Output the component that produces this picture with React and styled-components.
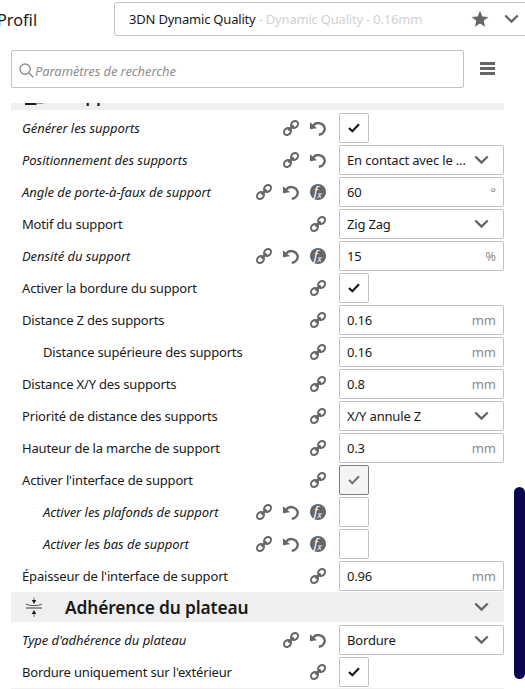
import React from "react";
import styled, { createGlobalStyle } from "styled-components";

const GlobalStyle = createGlobalStyle`
  * {
    box-sizing: border-box;
  }

  body {
    margin: 0;
    background: #fff;
    color: #191919;
    font-family: "Noto Sans", sans-serif;
    font-size: 13px;
    letter-spacing: -0.17px;
    overflow: hidden;
  }

  svg {
    display: block;
    flex: none;
  }
`;

const Page = styled.div`
  width: 525px;
  height: 689px;
  overflow: hidden;
  background: #fff;
`;

const ProfileBar = styled.div`
  display: flex;
  align-items: center;
  height: 36px;
  margin-top: 1px;
`;

const ProfileLabel = styled.div`
  flex: none;
  width: 117px;
  margin-left: -3px;
  padding-top: 1px;
  font-size: 16.3px;
  letter-spacing: 0;
  line-height: 36px;
`;

const ProfileSelect = styled.div`
  display: flex;
  align-items: center;
  flex: none;
  width: 430px;
  height: 34px;
  padding-left: 14px;
  border: 1px solid #c0c1c2;
  border-radius: 3px;
  letter-spacing: -0.2px;
  white-space: pre;
`;

const ProfileName = styled.div`
  width: 342px;
  line-height: 32px;

  span {
    color: #d2d2d2;
  }
`;

const ProfileIcons = styled.div`
  display: flex;
  align-items: center;
  gap: 15px;
`;

const SearchBar = styled.div`
  display: flex;
  align-items: center;
  margin: 13px 0 0 11px;
`;

const SearchField = styled.div`
  display: flex;
  align-items: center;
  width: 453px;
  height: 38px;
  padding: 3px 0 0 7px;
  border: 1px solid #c0c1c2;
  border-radius: 2px;
  color: #8e8e8e;
  font-style: italic;
  letter-spacing: -0.1px;

  span {
    margin-left: 1px;
  }
`;

const MenuIcon = styled.div`
  display: flex;
  flex-direction: column;
  gap: 2px;
  margin: 0 0 1px 16px;

  i {
    width: 15px;
    height: 3px;
    background: #666;
  }
`;

const Content = styled.div`
  display: flex;
  height: 586px;
  margin-top: 15px;
`;

const Viewport = styled.div`
  width: 493px;
  height: 586px;
  margin-left: 11px;
  overflow: hidden;
`;

const SettingsList = styled.div`
  display: flex;
  flex-direction: column;
  gap: 2px;
  margin-top: -22px;
`;

const Category = styled.div`
  display: flex;
  align-items: center;
  flex: none;
  height: 30px;
  margin: -1px 0 1px;
  padding: 0 15px 0 14px;
  background: #efefef;
  font-size: 17.33px;
  font-weight: 600;
  letter-spacing: -0.13px;

  span {
    flex: 1;
    margin-left: 22px;
  }
`;

const Row = styled.div`
  display: flex;
  align-items: center;
  height: 30px;
  padding-left: ${({ $indent }) => ($indent ? 32 : 11)}px;
`;

const Label = styled.div`
  flex: 1;
  line-height: 30px;
  white-space: nowrap;
  font-style: ${({ $changed }) => ($changed ? "italic" : "normal")};
  letter-spacing: ${({ $changed }) => ($changed ? -0.05 : -0.17)}px;
`;

const Icons = styled.div`
  display: flex;
  gap: 11px;
  margin-right: 13px;
`;

const Control = styled.div`
  width: 165px;
`;

const Field = styled.div`
  display: flex;
  align-items: center;
  justify-content: space-between;
  height: 30px;
  padding: 0 ${({ $select }) => ($select ? 14 : 7)}px 0 7px;
  border: 1px solid #c0c1c2;
  border-radius: 2px;
  line-height: 28px;
  white-space: nowrap;
`;

const Unit = styled.span`
  color: #8c8c8c;
  letter-spacing: 0;
`;

const Checkbox = styled.div`
  display: flex;
  align-items: center;
  justify-content: center;
  width: 30px;
  height: 30px;
  border: 1px solid ${({ $disabled }) => ($disabled ? "#7c7c7c" : "#c0c1c2")};
  border-radius: 2px;
  background: ${({ $disabled }) => ($disabled ? "#f4f4f4" : "#fff")};
  color: ${({ $disabled }) => ($disabled ? "#777" : "#191919")};
`;

const Scrollbar = styled.div`
  width: 11px;
  height: 192px;
  margin: 384px 0 0 10px;
  border-radius: 6px;
  background: #0a0850;
`;

const Chevron = () => (
  <svg width="15" height="10" viewBox="0 0 15 10">
    <path d="M1.3 1.5 7.5 7.6l6.2-6.1" fill="none" stroke="#666" strokeWidth="2.4" />
  </svg>
);

const Star = () => (
  <svg width="18" height="18" viewBox="0 0 18 18">
    <path
      d="M9 .8 11.3 6.4l6 .5-4.6 3.9 1.4 5.9L9 13.5l-5.1 3.2 1.4-5.9L.7 6.9l6-.5z"
      fill="#666"
    />
  </svg>
);

const SearchIcon = () => (
  <svg width="15" height="15" viewBox="0 0 15 15" fill="none" stroke="#8e8e8e">
    <circle cx="6.1" cy="6.1" r="5.1" strokeWidth="1.4" />
    <path d="m9.8 9.8 4.5 4.4" strokeWidth="1.5" />
  </svg>
);

const LinkIcon = () => (
  <svg width="16" height="16" viewBox="0 0 16 16" fill="none" stroke="#666">
    <ellipse cx="11.5" cy="4.5" rx="3.8" ry="3.1" strokeWidth="2" transform="rotate(-45 11.5 4.5)" />
    <ellipse cx="4.5" cy="11.5" rx="3.8" ry="3.1" strokeWidth="2" transform="rotate(-45 4.5 11.5)" />
    <path d="m5.4 10.6 5.2-5.2" strokeWidth="2.2" />
  </svg>
);

const ResetIcon = () => (
  <svg width="16" height="16" viewBox="0 0 16 16">
    <path d="M3.2 5.4A6.7 6.7 0 0 1 14.8 8.4 6.6 6.6 0 0 1 8.8 14.8" fill="none" stroke="#666" strokeWidth="2.4" />
    <path d="M0 2.2V9.3L7 8.3z" fill="#666" />
  </svg>
);

const FormulaIcon = () => (
  <svg width="16" height="16" viewBox="0 0 16 16">
    <circle cx="8" cy="8" r="8" fill="#666" />
    <g fill="#fff" fontFamily="Noto Sans, sans-serif" fontStyle="italic">
      <text x="3.8" y="11.5" fontSize="13">f</text>
      <text x="7.6" y="13.6" fontSize="8.5">x</text>
    </g>
  </svg>
);

const CheckIcon = () => (
  <svg width="12" height="10" viewBox="0 0 12 10">
    <path d="m1 5 3.3 3.2L11 1.3" fill="none" stroke="currentColor" strokeWidth="2.2" />
  </svg>
);

const SupportIcon = () => (
  <svg width="18" height="20" viewBox="0 0 18 20">
    <path d="M0 0h18v4h-6.5v16H0z" fill="#191919" />
    <path d="M11.5 18.5h6.5" stroke="#999" />
  </svg>
);

const AdhesionIcon = () => (
  <svg width="18" height="20" viewBox="0 0 18 20">
    <path d="M1 11h16" stroke="#777" strokeWidth="1.5" />
    <path d="M1 7.2Q4.5 8.7 9 8.7T17 7.2" fill="none" stroke="#555" />
    <path d="M9 .5v3M9 16v4" stroke="#777" />
    <path d="M6.8 3h4.4L9 6.9zM6.8 17h4.4L9 13.1z" fill="#191919" />
  </svg>
);

const supportSettings = [
  { label: "Générer les supports", type: "check", checked: true, changed: true },
  { label: "Positionnement des supports", type: "select", value: "En contact avec le ...", changed: true },
  { label: "Angle de porte-à-faux de support", value: "60", unit: "°", changed: true, formula: true },
  { label: "Motif du support", type: "select", value: "Zig Zag" },
  { label: "Densité du support", value: "15", unit: "%", changed: true, formula: true },
  { label: "Activer la bordure du support", type: "check", checked: true },
  { label: "Distance Z des supports", value: "0.16", unit: "mm" },
  { label: "Distance supérieure des supports", value: "0.16", unit: "mm", indent: true },
  { label: "Distance X/Y des supports", value: "0.8", unit: "mm" },
  { label: "Priorité de distance des supports", type: "select", value: "X/Y annule Z" },
  { label: "Hauteur de la marche de support", value: "0.3", unit: "mm" },
  { label: "Activer l'interface de support", type: "check", checked: true, disabled: true },
  { label: "Activer les plafonds de support", type: "check", changed: true, formula: true, indent: true },
  { label: "Activer les bas de support", type: "check", changed: true, formula: true, indent: true },
  { label: "Épaisseur de l'interface de support", value: "0.96", unit: "mm" },
];

const adhesionSettings = [
  { label: "Type d'adhérence du plateau", type: "select", value: "Bordure", changed: true },
  { label: "Bordure uniquement sur l'extérieur", type: "check", checked: true },
];

function Setting({ label, type, value, unit, checked, disabled, changed, formula, indent }) {
  return (
    <Row $indent={indent}>
      <Label $changed={changed}>{label}</Label>
      <Icons>
        <LinkIcon />
        {changed && <ResetIcon />}
        {formula && <FormulaIcon />}
      </Icons>
      <Control>
        {type === "check" ? (
          <Checkbox $disabled={disabled}>{checked && <CheckIcon />}</Checkbox>
        ) : (
          <Field $select={type === "select"}>
            {value}
            {type === "select" ? <Chevron /> : <Unit>{unit}</Unit>}
          </Field>
        )}
      </Control>
    </Row>
  );
}

function App() {
  return (
    <Page>
      <GlobalStyle />
      <ProfileBar>
        <ProfileLabel>Profil</ProfileLabel>
        <ProfileSelect>
          <ProfileName>
            3DN Dynamic Quality <span>- Dynamic Quality - 0.16mm</span>
          </ProfileName>
          <ProfileIcons>
            <Star />
            <Chevron />
          </ProfileIcons>
        </ProfileSelect>
      </ProfileBar>

      <SearchBar>
        <SearchField>
          <SearchIcon />
          <span>Paramètres de recherche</span>
        </SearchField>
        <MenuIcon>
          <i />
          <i />
          <i />
        </MenuIcon>
      </SearchBar>

      <Content>
        <Viewport>
          <SettingsList>
            <Category>
              <SupportIcon />
              <span>Supports</span>
              <Chevron />
            </Category>
            {supportSettings.map((setting) => (
              <Setting key={setting.label} {...setting} />
            ))}
            <Category>
              <AdhesionIcon />
              <span>Adhérence du plateau</span>
              <Chevron />
            </Category>
            {adhesionSettings.map((setting) => (
              <Setting key={setting.label} {...setting} />
            ))}
            <Category />
          </SettingsList>
        </Viewport>
        <Scrollbar />
      </Content>
    </Page>
  );
}

export default App;
